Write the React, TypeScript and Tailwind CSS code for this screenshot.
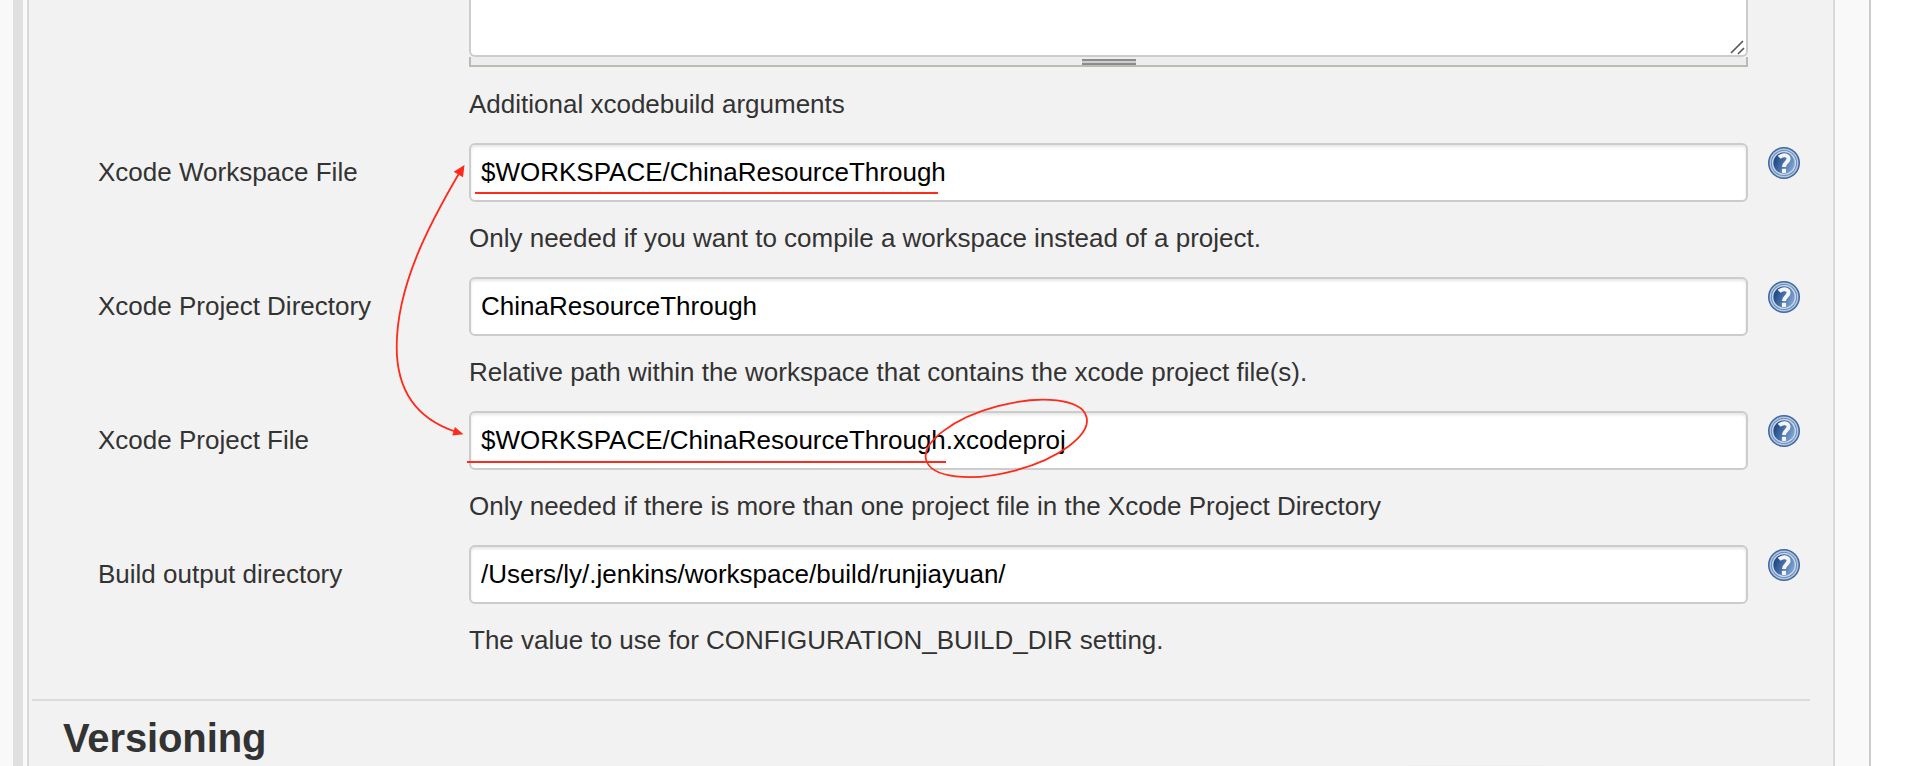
type Field = { label: string; value: string; hint: string };

const fields: Field[] = [
  {
    label: "Xcode Workspace File",
    value: "$WORKSPACE/ChinaResourceThrough",
    hint: "Only needed if you want to compile a workspace instead of a project.",
  },
  {
    label: "Xcode Project Directory",
    value: "ChinaResourceThrough",
    hint: "Relative path within the workspace that contains the xcode project file(s).",
  },
  {
    label: "Xcode Project File",
    value: "$WORKSPACE/ChinaResourceThrough.xcodeproj",
    hint: "Only needed if there is more than one project file in the Xcode Project Directory",
  },
  {
    label: "Build output directory",
    value: "/Users/ly/.jenkins/workspace/build/runjiayuan/",
    hint: "The value to use for CONFIGURATION_BUILD_DIR setting.",
  },
];

function HelpIcon() {
  return (
    <svg viewBox="0 0 32 32" className="mt-1 ml-5 size-8 shrink-0">
      <defs>
        <linearGradient id="help-fill" x1="0" y1="0.3" x2="1" y2="0.7">
          <stop offset="0.1" stopColor="#204a87" />
          <stop offset="0.9" stopColor="#7ba0cd" />
        </linearGradient>
      </defs>
      <circle cx="16" cy="16" r="16" fill="#3f67a3" />
      <circle cx="16" cy="16" r="13.7" fill="#5f83b6" stroke="#b4c7e0" strokeWidth="1.5" />
      <circle cx="16" cy="16" r="11.4" fill="url(#help-fill)" stroke="#c9d7ea" strokeWidth="1.5" />
      <path d="M11.2 10.4C12.800 8.600 14.800 8 16.800 8.200C19.600 8.500 20.800 10.200 20.500 12.300C20.200 15 16.200 15.600 16 20" fill="none" stroke="#f2f5fa" strokeWidth="4" />
      <rect x="13.900" y="21.800" width="4.200" height="4.200" rx="0.800" fill="#f2f5fa" />
    </svg>
  );
}

function FieldRow({ label, value, hint }: Field) {
  return (
    <div className="flex h-[134px] items-start">
      <div className="w-[371px] shrink-0 pt-[14px] leading-[30px]">{label}</div>
      <div className="w-[1279px] shrink-0">
        <input
          readOnly
          defaultValue={value}
          className="block h-[59px] w-full rounded-[6px] border-2 border-[#ccc] bg-white px-[10px] pb-[1px] text-black shadow-[inset_0_2px_3px_rgba(0,0,0,0.1)] outline-none"
        />
        <div className="mt-[21px] leading-[30px] whitespace-nowrap">{hint}</div>
      </div>
      <HelpIcon />
    </div>
  );
}

function Annotations() {
  return (
    <svg
      viewBox="0 0 1908 766"
      className="pointer-events-none absolute top-0 left-0 h-[766px] w-[1908px]"
      fill="none"
      stroke="#ff2a1a"
      strokeWidth="1.8"
    >
      <path d="M475 193H938M467 462H946" strokeWidth="2" />
      <path d="M459 173.500C430 223 396.700 285 396.700 347C396.700 392 418 419 455 431.500" />
      <path d="M464.500 165L453.700 171.700L463 177.200ZM463.500 434.300L454.900 426.900L452.300 435.400Z" fill="#ff2a1a" stroke="none" />
      <ellipse cx="1006.300" cy="438.400" rx="83" ry="33.300" transform="rotate(-15 1006.300 438.400)" />
    </svg>
  );
}

export default function App() {
  return (
    <div className="relative flex h-[766px] w-[1908px] overflow-hidden bg-white font-['Liberation_Sans',Arial,sans-serif] text-[26px] text-[#333]">
      <div className="w-[13px] shrink-0 bg-[#f9f9f9]" />
      <div className="w-[10px] shrink-0 bg-[#e0e0e0]" />
      <div className="flex w-[1848px] shrink-0 border-r-2 border-[#ccc] bg-[#f9f9f9] pl-1">
        <main className="flex w-[1808px] flex-col border-x-2 border-[#d9d9d9] bg-[#f2f2f2]">
          <div className="ml-[440px] w-[1279px]">
            <div className="flex h-[57px] items-end justify-end rounded-b-[6px] border-2 border-t-0 border-[#ccc] bg-white pr-[2px]">
              <svg viewBox="0 0 16 16" className="size-4 overflow-visible" fill="none" stroke="#555" strokeWidth="1.6">
                <path d="M3 14L15 2M10 15L16 9" />
              </svg>
            </div>
            <div className="flex h-[10px] justify-center border-2 border-t-0 border-[#bbbbb4] bg-[#ededed] pt-[2px]">
              <div className="h-[6px] w-[54px] border-y-2 border-[#8c8c8a] bg-[#cdcdcb]" />
            </div>
          </div>
          <div className="mt-[22px] ml-[440px] leading-[30px]">Additional xcodebuild arguments</div>
          <div className="mt-[24px] ml-[69px]">
            {fields.map((field) => (
              <FieldRow key={field.label} {...field} />
            ))}
          </div>
          <div className="mt-[20px] ml-[3px] h-[2px] w-[1778px] shrink-0 bg-[#dcdcdc]" />
          <h2 className="mt-[14px] ml-[34px] h-[50px] text-[40px] leading-[46px] font-bold tracking-[-0.12px]">Versioning</h2>
          <div className="ml-[1379px] h-px w-[136px] bg-[#eeeeee]" />
        </main>
      </div>
      <Annotations />
    </div>
  );
}
